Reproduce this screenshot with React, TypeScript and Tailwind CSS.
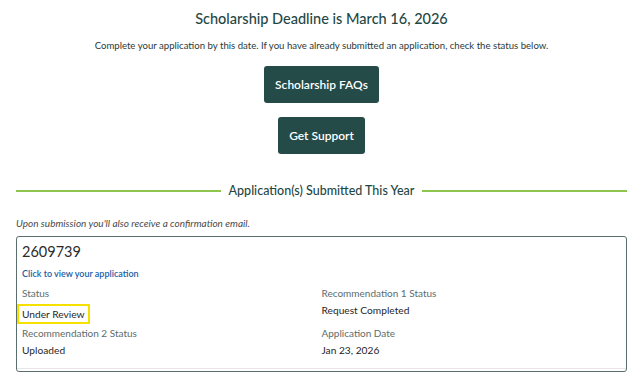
export default function App() {
  const rows = [
    [
      { label: "Status", value: "Under Review", highlight: true },
      { label: "Recommendation 1 Status", value: "Request Completed" },
    ],
    [
      { label: "Recommendation 2 Status", value: "Uploaded" },
      { label: "Application Date", value: "Jan 23, 2026" },
    ],
  ];

  return (
    <div className="w-[643px] h-[384px] overflow-hidden bg-white font-['Lato',sans-serif] text-[#1f4744]">
      {/* Deadline header */}
      <div className="pt-[10px] text-center">
        <h1 className="text-[14.5px] font-medium leading-[18px]">
          Scholarship Deadline is March 16, 2026
        </h1>
        <p className="mt-[12px] text-[9.6px] leading-[12px] text-[#2a3a39]">
          Complete your application by this date. If you have already submitted an application, check the status below.
        </p>
      </div>

      <div className="mt-[14px] flex flex-col items-center gap-[14px]">
        <button className="h-[37px] rounded-[3px] bg-[#244b48] px-[11px] text-[12px] font-semibold text-white">
          Scholarship FAQs
        </button>
        <button className="h-[37px] rounded-[3px] bg-[#244b48] px-[11px] text-[12px] font-semibold text-white">
          Get Support
        </button>
      </div>

      {/* Section divider */}
      <div className="mx-4 mt-[29px] flex items-center gap-[8px]">
        <div className="h-[2px] flex-1 bg-[#8dc54f]" />
        <h2 className="text-[12.5px] font-medium leading-[16px]">Application(s) Submitted This Year</h2>
        <div className="h-[2px] flex-1 bg-[#8dc54f]" />
      </div>

      <p className="mx-4 mt-[18px] text-[10px] italic leading-[12px] text-[#4a4a4a]">
        Upon submission you'll also receive a confirmation email.
      </p>

      {/* Application card */}
      <div className="mx-4 mt-[7px] rounded-[3px] border border-[#5a6e6d]">
        <div className="px-[5px] pt-[6px] pb-[12px]">
          <div className="text-[14.5px] leading-[18px] text-[#2b2b2b]">2609739</div>
          <a className="mt-[7px] block text-[9px] font-semibold leading-[12px] text-[#1a5ea6]">
            Click to view your application
          </a>
          {rows.map((row, i) => (
            <div key={i} className={`grid grid-cols-2 ${i === 0 ? "mt-[7px]" : "mt-[11px]"}`}>
              {row.map((f) => (
                <div key={f.label}>
                  <div className="text-[10px] leading-[12px] text-[#5c6d6c]">{f.label}</div>
                  <div className="mt-[5px] h-[12px] text-[10.2px] leading-[12px] text-[#1f1f1f]">
                    {f.highlight ? (
                      <span className="-ml-[5px] inline-block border-2 border-[#f6e000] px-[3px] py-[2px]">
                        {f.value}
                      </span>
                    ) : (
                      f.value
                    )}
                  </div>
                </div>
              ))}
            </div>
          ))}
        </div>
        <div className="h-[3px] border-t border-[#e6e6e6]" />
      </div>
    </div>
  );
}
